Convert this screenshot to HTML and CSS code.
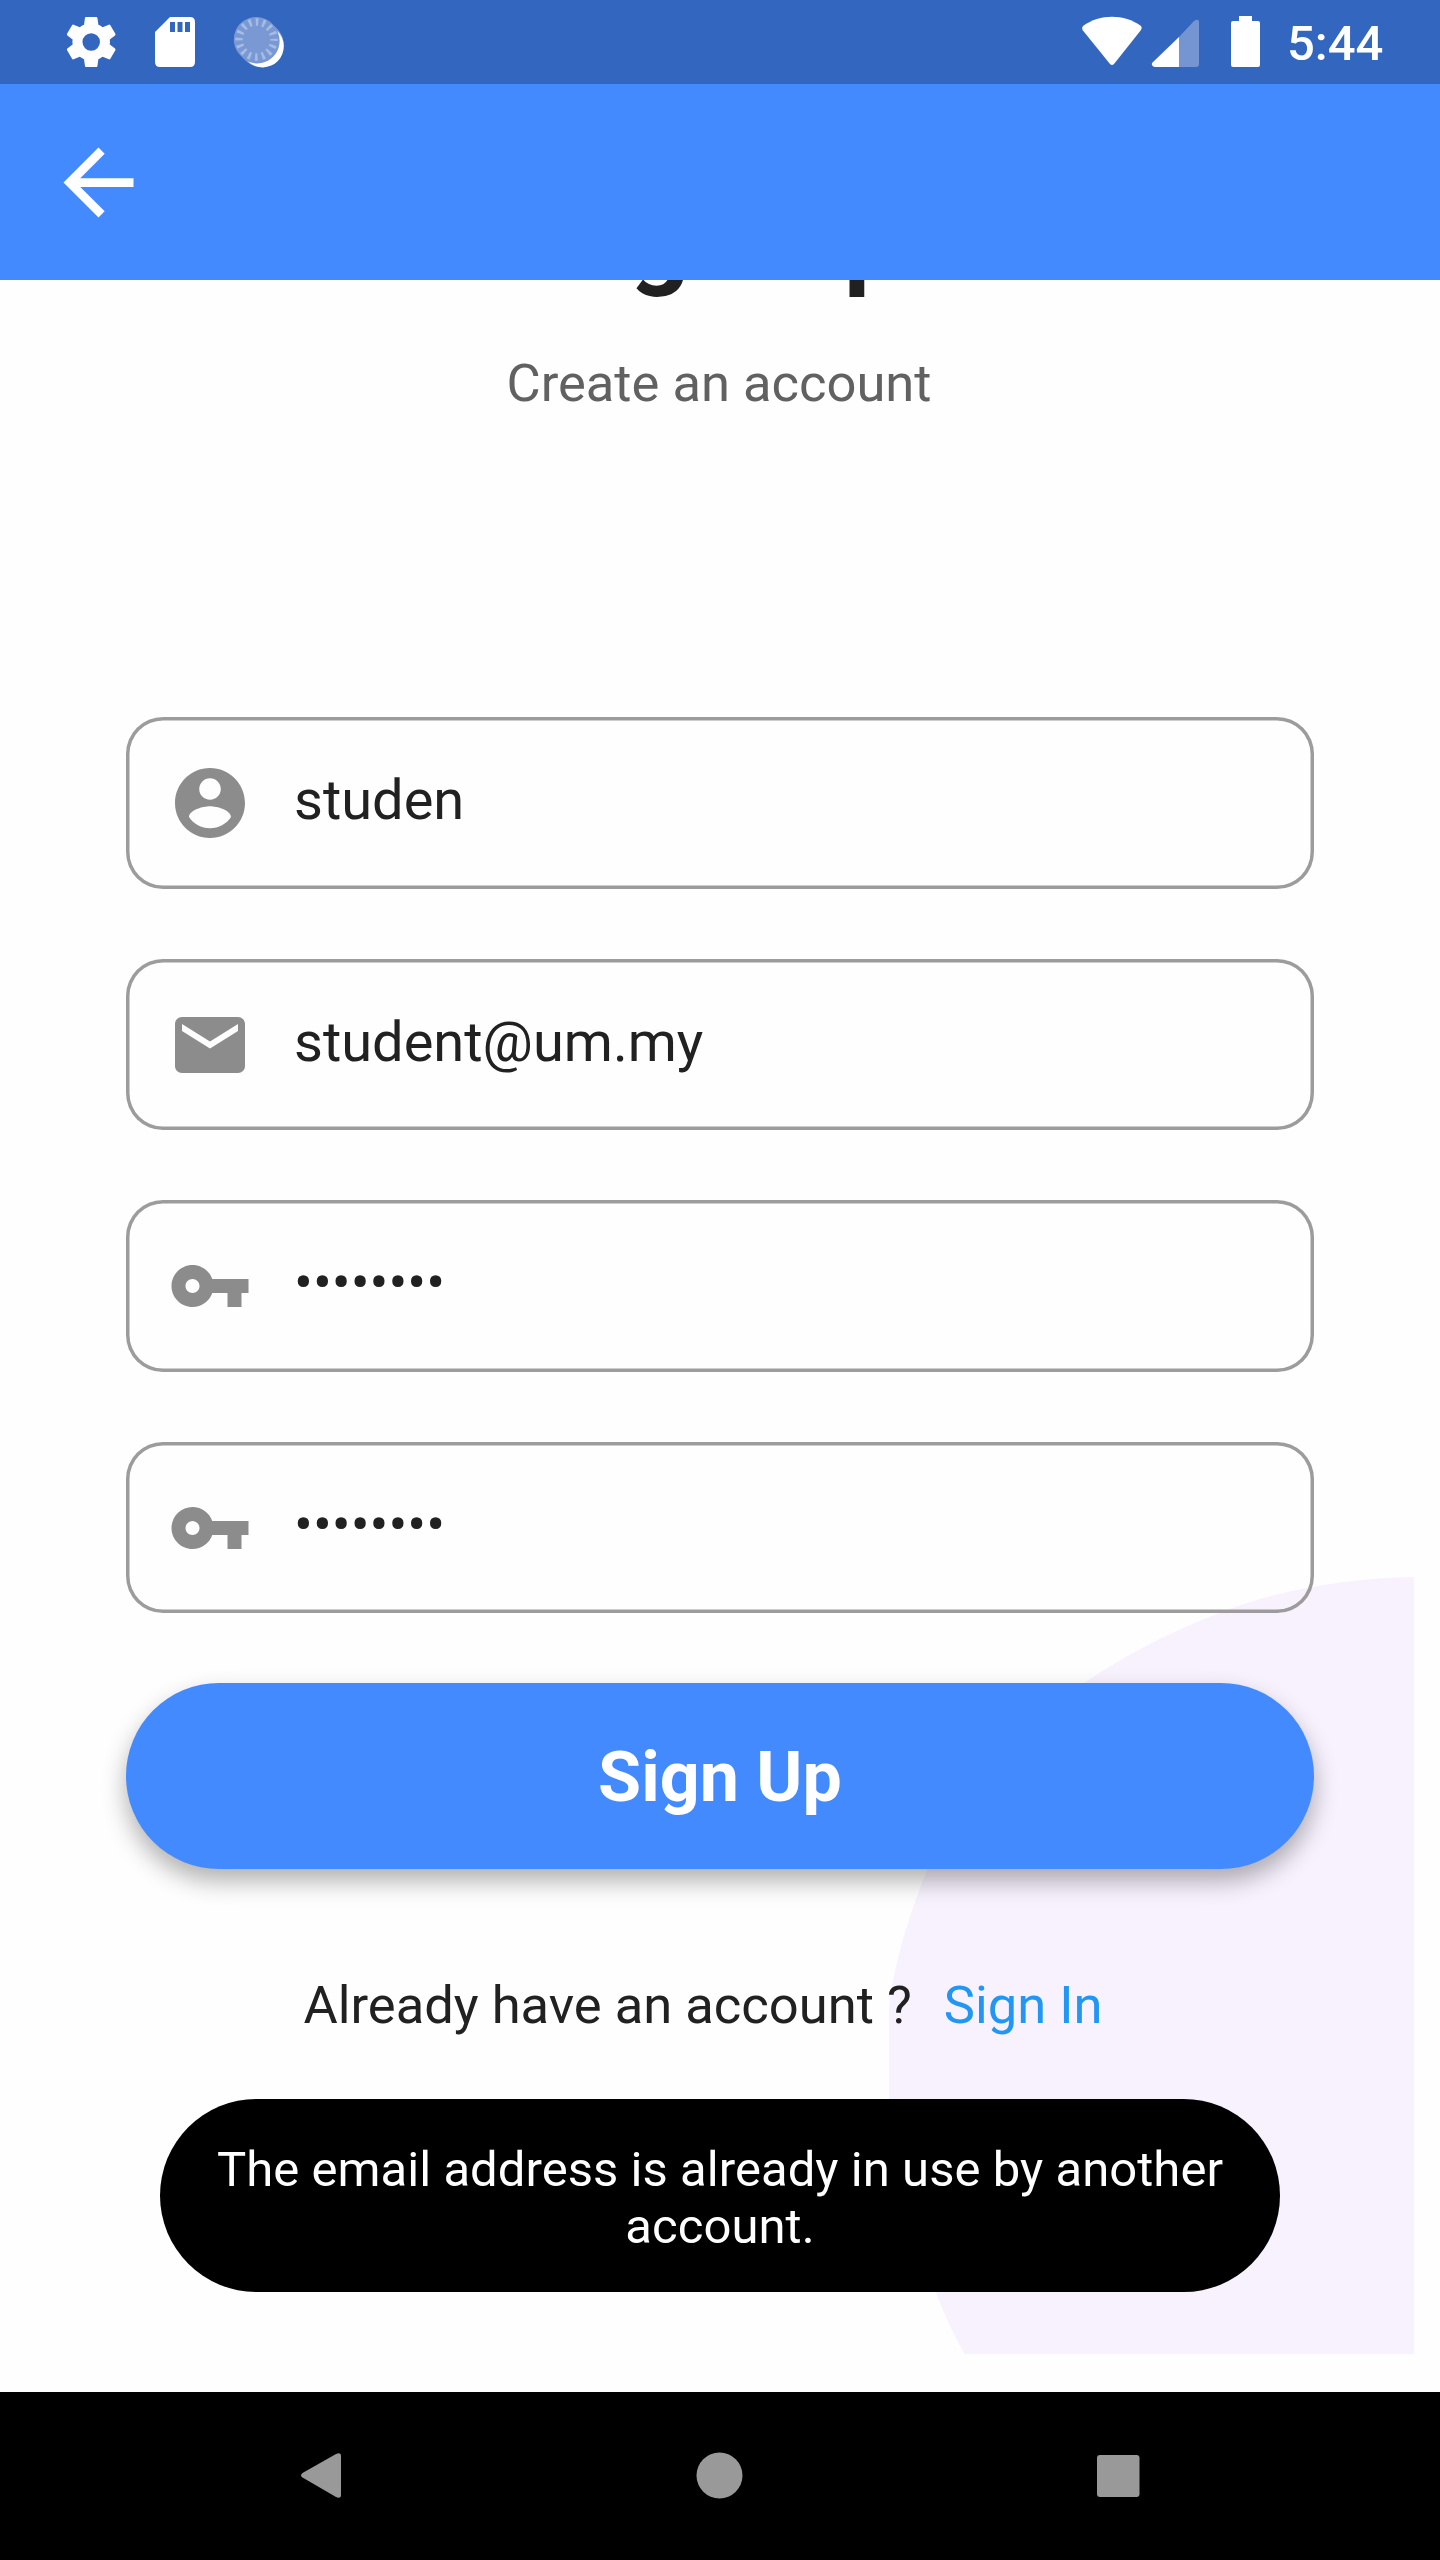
FILE: index.html
```html
<!DOCTYPE html>
<html lang="en">
<head>
<meta charset="utf-8">
<title>Sign Up</title>
<link rel="stylesheet" href="styles.css">
</head>
<body>
<div class="screen">
  <header class="status">
    <svg class="status-left" width="240" height="84" viewBox="0 0 240 84">
      <g fill="#fff">
        <path transform="translate(61.2 12) scale(2.5)" d="M19.43 12.98c.04-.32.07-.64.07-.98s-.03-.66-.07-.98l2.11-1.65c.19-.15.24-.42.12-.64l-2-3.46c-.12-.22-.39-.3-.61-.22l-2.49 1c-.52-.4-1.08-.73-1.69-.98l-.38-2.65C14.46 2.18 14.25 2 14 2h-4c-.25 0-.46.18-.49.42l-.38 2.65c-.61.25-1.17.59-1.69.98l-2.49-1c-.23-.09-.49 0-.61.22l-2 3.46c-.13.22-.07.49.12.64l2.11 1.65c-.04.32-.07.65-.07.98s.03.66.07.98l-2.11 1.65c-.19.15-.24.42-.12.64l2 3.46c.12.22.39.3.61.22l2.49-1c.52.4 1.08.73 1.69.98l.38 2.65c.03.24.24.42.49.42h4c.25 0 .46-.18.49-.42l.38-2.65c.61-.25 1.17-.59 1.69-.98l2.49 1c.23.09.49 0 .61-.22l2-3.46c.12-.22.07-.49-.12-.64zM12 15.5a3.5 3.5 0 1 1 0-7 3.5 3.5 0 0 1 0 7z"/>
        <path fill-rule="evenodd" d="M170 17h20q5 0 5 5v40q0 5-5 5h-30q-5 0-5-5V32zM170 22v10h5V22zm7.500 0v10h5V22zm7.500 0v10h5V22z"/>
      </g>
    </svg>
    <svg class="spinner" width="52" height="52" viewBox="0 0 52 52">
      <path fill="#7a99d4" d="M23 1a22 22 0 0 1 16 6.500l5 5A22.500 22.500 0 0 1 28 51a22 22 0 0 1-14-5l-7-7A22.500 22.500 0 0 1 23 1z"/>
      <path fill="#fff" d="M44.300 15A20.900 20.900 0 0 1 15 45.500A22.500 22.500 0 0 0 44.300 15z"/>
      <circle cx="23.500" cy="23.500" r="17.500" fill="none" stroke="#a5bce3" stroke-width="7.500" stroke-dasharray="2.600 4.272" stroke-dashoffset="1.300"/>
    </svg>
    <svg class="status-right" width="240" height="84" viewBox="1070 0 240 84">
      <path fill="#fff" d="M1083 26C1100 13.700 1124 13.700 1141 26q1.500 1.500 0 4L1114 64q-2 2-4 0L1082.500 30q-1-2.500.5-4z"/>
      <path fill="#7595d2" d="M1179 37l15-16q5-3 5 1v42q0 3-3 3h-17z"/>
      <path fill="#fff" d="M1179 37v30h-24q-4-1-3-4z"/>
      <path fill="#fff" d="M1239 16h13v5h6q2 0 2 2v42q0 2-2 2h-25q-2 0-2-2V23q0-2 2-2h6z"/>
    </svg>
    <span class="clock">5:44</span>
  </header>
  <nav class="appbar">
    <svg width="105" height="105" viewBox="0 0 24 24"><path fill="#fff" d="M20 11H7.830l5.590-5.590L12 4l-8 8 8 8 1.410-1.410L7.830 13H20z"/></svg>
  </nav>
  <main class="content">
    <svg class="blob" width="525" height="777" viewBox="889 1577 525 777">
      <path fill="#f7f2fe" d="M1414 1577C1350 1578 1280 1589 1222 1612C1170 1632 1125 1655 1084 1683C1010 1735 955 1790 927.500 1869C905 1925 893 1970 889 2010V2135C897 2190 912 2240 935.700 2292Q948 2325 964.500 2354H1414z"/>
    </svg>
    <h1 class="heading">Sign Up</h1>
    <p class="subtitle">Create an account</p>
    <form class="form">
      <div class="field">
        <svg class="icon" viewBox="0 0 24 24"><path d="M12 2C6.480 2 2 6.480 2 12s4.480 10 10 10 10-4.480 10-10S17.520 2 12 2zm0 2.920a3.080 3.080 0 1 1 0 6.160 3.080 3.080 0 0 1 0-6.160zM12 19.200c-2.500 0-4.710-1.280-6-3.220.03-1.990 4-3.080 6-3.080 1.990 0 5.970 1.090 6 3.080-1.290 1.940-3.500 3.220-6 3.220z"/></svg>
        <span class="value">studen</span>
      </div>
      <div class="field">
        <svg class="icon" viewBox="0 0 24 24"><path d="M20 4H4c-1.100 0-1.990.9-1.990 2L2 18c0 1.100.9 2 2 2h16c1.100 0 2-.9 2-2V6c0-1.100-.9-2-2-2zm0 4l-8 5-8-5V6l8 5 8-5v2z"/></svg>
        <span class="value">student@um.my</span>
      </div>
      <div class="field">
        <svg class="icon" viewBox="0 0 24 24"><path d="M12.650 10C11.830 7.670 9.610 6 7 6c-3.310 0-6 2.690-6 6s2.690 6 6 6c2.610 0 4.830-1.670 5.650-4H17v4h4v-4h2v-4H12.650zM7 14c-1.100 0-2-.9-2-2s.9-2 2-2 2 .9 2 2-.9 2-2 2z"/></svg>
        <span class="value">••••••••</span>
      </div>
      <div class="field">
        <svg class="icon" viewBox="0 0 24 24"><path d="M12.650 10C11.830 7.670 9.610 6 7 6c-3.310 0-6 2.690-6 6s2.690 6 6 6c2.610 0 4.830-1.670 5.650-4H17v4h4v-4h2v-4H12.650zM7 14c-1.100 0-2-.9-2-2s.9-2 2-2 2 .9 2 2-.9 2-2 2z"/></svg>
        <span class="value">••••••••</span>
      </div>
      <button class="submit" type="button">Sign Up</button>
    </form>
    <p class="switch"><span class="question">Already have an account ?</span><a class="link">Sign In</a></p>
    <div class="toast">The email address is already in use by another account.</div>
  </main>
  <footer class="navbar">
    <svg width="1440" height="168" viewBox="0 2392 1440 168" fill="#999">
      <path d="M302.500 2477.500q-3-2 0-4.500L336 2454q5-2 5 2v39q0 4-5 2z"/>
      <circle cx="719.500" cy="2475.500" r="23"/>
      <rect x="1097" y="2455" width="42.500" height="42" rx="3"/>
    </svg>
  </footer>
</div>
</body>
</html>
```
FILE: styles.css
```css
* { box-sizing: border-box; }
body { margin: 0; background: #fefefe; font-family: Roboto, sans-serif; }
h1, p { margin: 0; }
svg { display: block; }
.screen { width: 1440px; height: 2560px; display: flex; flex-direction: column; overflow: hidden; }
.status { height: 84px; background: #3366be; display: flex; align-items: center; flex: none; position: relative; z-index: 2; }
.spinner { margin-left: -7px; }
.status-right { margin-left: 785px; }
.clock { color: #fff; font-size: 49px; font-weight: 500; line-height: 84px; margin-left: -23px; padding-top: 4px; }
/* The bar stays above the scrolled page title */
.appbar { height: 196px; background: #448aff; display: flex; align-items: center; padding-left: 45.500px; flex: none; position: relative; z-index: 2; }
.content { position: relative; height: 2112px; flex: none; background: #fefefe; display: flex; flex-direction: column; align-items: center; }
.blob { position: absolute; left: 889px; top: 1297px; }
.heading { margin-top: -102px; font-size: 105px; line-height: 124px; font-weight: 700; color: #212121; }
.subtitle { position: relative; margin: 50px 2px 0 0; font-size: 52.500px; line-height: 62px; color: #616161; }
.form { position: relative; width: 1188px; margin-top: 303px; display: flex; flex-direction: column; gap: 70px; }
.field { height: 171.500px; border-radius: 37px; box-shadow: inset 0 0 0 3.500px #9c9c9c; display: flex; align-items: center; padding-left: 42px; }
.field:nth-child(even) { padding-top: 1px; }
.icon { width: 84px; height: 84px; fill: #8c8c8c; flex: none; }
.value { margin-left: 42px; font-size: 56px; line-height: 66px; color: #212121; padding-bottom: 6px; }
.submit { height: 185.500px; border: 0; padding: 3px 0 0; border-radius: 93px; background: #448aff; color: #fff; font: 700 70px/82px Roboto, sans-serif; box-shadow: 0 12px 24px rgba(0,0,0,.31); }
.switch { position: relative; width: 1188px; padding-left: 177.500px; margin-top: 105px; display: flex; gap: 32px; font-size: 52.500px; line-height: 62px; color: #212121; }
.link { color: #2196f3; }
.toast { position: relative; width: 1120px; height: 193px; margin-top: 63px; padding: 42px 42px 0; border-radius: 97px; background: #000; color: #fff; text-align: center; font-size: 49px; line-height: 57px; letter-spacing: .05px; }
.navbar { height: 168px; background: #000; flex: none; }
```
